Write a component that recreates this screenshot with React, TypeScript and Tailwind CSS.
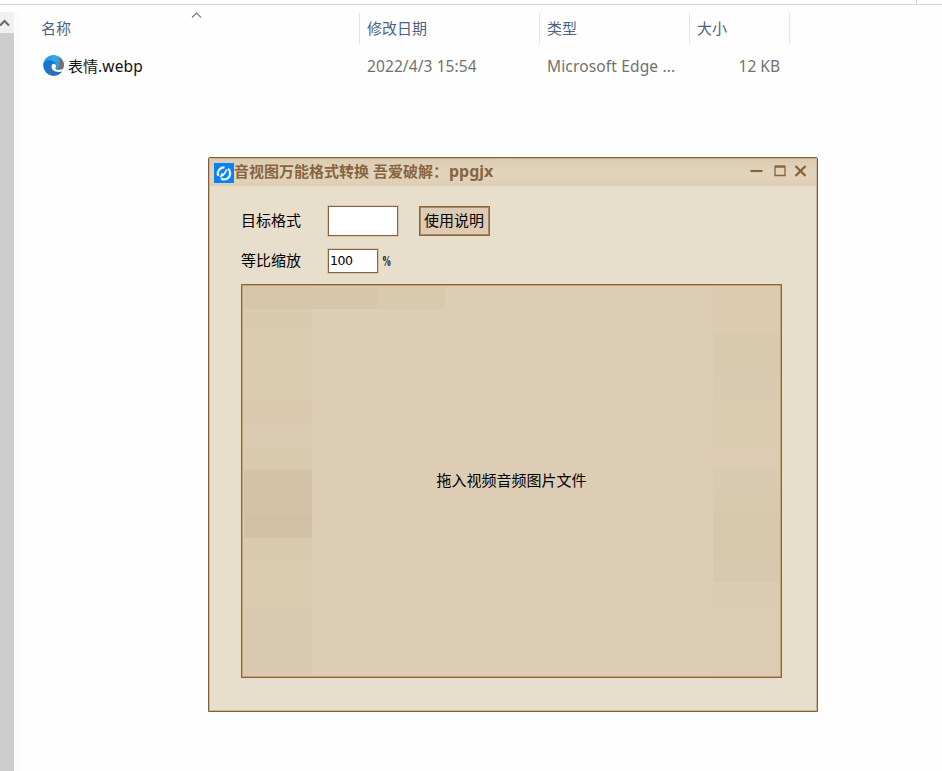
import React from "react";

const leftBands = [
  { h: 23, c: "#d6c5ab" },
  { h: 22, c: "#dacab0" },
  { h: 70, c: "#dbcbb1" },
  { h: 22, c: "#dac9af" },
  { h: 24, c: "#dbcbb2" },
  { h: 23, c: "#dacab0" },
  { h: 45, c: "#d3c2a7" },
  { h: 23, c: "#d1c0a6" },
  { h: 22, c: "#d9c9af" },
  { h: 47, c: "#dbcbb0" },
  { h: 69, c: "#dacab1" },
];

const rightBands = [
  { h: 45, c: "#dccbb1" },
  { h: 46, c: "#d9c9af" },
  { h: 23, c: "#dacab1" },
  { h: 46, c: "#dbcbb1" },
  { h: 22, c: "#ddccb3" },
  { h: 23, c: "#dacab1" },
  { h: 22, c: "#d9c9af" },
  { h: 47, c: "#d7c7ac" },
  { h: 22, c: "#d8c8af" },
  { h: 23, c: "#dbcbb2" },
  { h: 71, c: "#dcccb3" },
];

function Bands({ bands }: { bands: { h: number; c: string }[] }) {
  return (
    <>
      {bands.map((b, i) => (
        <div key={i} style={{ height: b.h, background: b.c }} />
      ))}
    </>
  );
}

function EdgeIcon() {
  return (
    <svg width="21" height="21" viewBox="0 0 20 20" className="mb-[2px] shrink-0">
      <defs>
        <linearGradient id="edgeTop" x1="0" y1="0" x2="1" y2="0.6">
          <stop offset="0" stopColor="#2487d6" />
          <stop offset="0.5" stopColor="#36a9ea" />
          <stop offset="1" stopColor="#3f8fc4" />
        </linearGradient>
      </defs>
      <circle cx="10" cy="10" r="9.8" fill="#0b76dc" />
      <path d="M0.4 8.6C1.4 3.6 5.2 0.2 10 0.2c5.8 0 9.8 4.2 9.8 9 0 2.8-2.2 4.8-5 4.8-1.6 0-3-.6-3-1.5 0-.6.8-.8.8-2.2C12.6 7.2 9.6 5 6.4 5 3.6 5 1.4 6.5.4 8.6Z" fill="url(#edgeTop)" />
      <path d="M15.5 2.6c2.7 1.7 4.3 4.2 4.3 7 0 2.5-2 4.4-5 4.4-.9 0-1.6-.2-2.2-.5 2.9-1.7 4.3-6.5 2.9-10.9Z" fill="#77716c" />
      <path d="M9.6 7.6c-2.5 1.5-4 4.4-2.8 7.5 1.7 3.9 7.2 4.5 12 .1-1.9 2.9-5 4.6-8.8 4.6-2.4 0-4.6-1.2-5.7-3.6-1.7-4 .8-8.5 5.3-8.6Z" fill="#456aa5" />
      <path d="M9.3 8.3c1.9-.2 3.2.8 3.2 2.3 0 .9-.7 1.200-.7 2 0 1 1.4 1.5 3 1.5 2 0 3.7-.5 4.9-1.6-.6 2.6-2.6 3.7-5.2 3.7-3.5 0-6.4-2-6.4-4.7 0-1.3.4-2.5 1.2-3.2Z" fill="#fefefe" />
    </svg>
  );
}

function ToolIcon() {
  return (
    <svg width="20" height="20" viewBox="0 0 20 20" className="shrink-0">
      <rect width="20" height="20" fill="#0a82f5" />
      <path d="M4.3 12.8A6.2 6.2 0 0 1 7 5.2Q8.500 4.300 10.500 4.400M14 5.700A6.200 6.200 0 0 1 13.500 15.500Q10.500 17.200 7 15.600" fill="none" stroke="#edf8ff" strokeWidth="2.300" />
      <path d="M7.200 10.500 9 12.200l3-3.700M8.800 12.200l-3 1.500M12.200 8.300V6.500" fill="none" stroke="#edf8ff" strokeWidth="1.800" />
    </svg>
  );
}

const cell = "flex h-[31px] items-center border-r border-[#e3e3e3] pl-[7px]";

function Explorer() {
  return (
    <div className="flex h-full flex-col">
      <div className="flex h-[5px] shrink-0 border-b border-[#d5d5d5]">
        <div className="w-[917px] border-r border-[#d5d5d5]" />
      </div>
      <div className="flex grow pt-[7px]">
        <div className="w-[14px] shrink-0 bg-[#cdcdcd]">
          <div className="flex h-[21px] items-center bg-[#eff1f1]">
            <svg width="10" height="10" viewBox="0 0 10 10">
              <path d="M0 7.5 4.5 3 9 7.5" fill="none" stroke="#6d655f" strokeWidth="2" />
            </svg>
          </div>
        </div>
        <div className="ml-[3px] grow border-l border-[#f5f5f5]">
          <div className="flex pt-px text-[15px] text-[#4a6384]">
            <div className="flex h-[31px] w-[342px] items-center border-r border-[#e3e3e3] pl-[23px]">
              <span className="w-[150px]">名称</span>
              <svg width="11" height="6" viewBox="0 0 11 6" className="mb-[27px]">
                <path d="M1 5.5 5.5 1 10 5.5" fill="none" stroke="#777" strokeWidth="1.1" />
              </svg>
            </div>
            <div className={cell + " w-[180px]"}>修改日期</div>
            <div className={cell + " w-[150px]"}>类型</div>
            <div className={cell + " w-[100px]"}>大小</div>
          </div>
          <div className="mt-[7px] flex h-[30px] items-center text-[15.5px] text-[#73716d]">
            <div className="flex w-[349px] items-center gap-[4px] pl-[25px] text-[#111]">
              <EdgeIcon />
              <span className="pt-px text-[15px]">表情<span className="text-[15.5px] tracking-[0.15px]">.webp</span></span>
            </div>
            <div className="w-[180px] pt-[2px] tracking-[0.1px]">2022/4/3 15:54</div>
            <div className="w-[150px] pt-[2px] tracking-[0.15px]">Microsoft Edge ...</div>
            <div className="w-[83px] pt-[2px] text-right">12 KB</div>
          </div>
        </div>
      </div>
    </div>
  );
}

function ConverterWindow() {
  return (
    <div className="absolute left-[208px] top-[157px] flex h-[555px] w-[610px] flex-col rounded-t-[2px] border border-[#7d5f38] bg-[#e7decc]">
      <div className="flex h-[28px] shrink-0 items-center border border-b-0 border-[#cdb698] bg-linear-to-b from-[#dccbb1] via-[#e2d5bd] to-[#dfceb5] pl-[4px]">
        <div className="pt-px"><ToolIcon /></div>
        <span className="mb-[3px] grow whitespace-pre text-[15px] font-bold text-[#87653f]">音视图万能格式转换 吾爱破解：<span className="ml-px text-[16px]">ppgjx</span></span>
        <svg width="58" height="16" viewBox="0 0 58 16" className="mb-[3px] mr-[9px] shrink-0" fill="none" stroke="#89643a">
          <path d="M1.5 8h12" strokeWidth="2.2" />
          <path d="M26 3.5h10v9H26z" strokeWidth="1.3" />
          <path d="M26 3.5h10" strokeWidth="2.2" />
          <path d="m46.5 3 10 10m0-10-10 10" strokeWidth="2.3" />
        </svg>
      </div>
      <div className="flex grow flex-col border-x border-b border-[#cdb698] bg-[#e7decc] pl-[31px] pt-[20px] text-[15px] text-black">
        <div className="flex h-[30px] items-center">
          <span className="mb-[2px] w-[87px]">目标格式</span>
          <div className="h-[30px] w-[70px] border border-[#8c6439] bg-white outline-1 outline-[#8c6439]/20" />
          <button className="ml-[21px] flex h-[30px] w-[71px] items-center justify-center whitespace-nowrap border-2 border-[#a98a64] bg-[#ddccb3] pb-[2px] pr-px outline-1 -outline-offset-1 outline-[#8c6439]">使用说明</button>
        </div>
        <div className="mt-[13px] flex h-[24px] items-center">
          <span className="mb-px w-[87px]">等比缩放</span>
          <div className="flex h-[24px] w-[50px] items-center border border-[#8c6439] bg-white pl-px font-['DejaVu_Sans'] text-[12.5px] tracking-[-0.4px] outline-1 outline-[#8c6439]/20">100</div>
          <span className="ml-[4px] font-['Liberation_Serif'] text-[15px] font-bold">
            <span className="inline-block w-[10px] origin-left scale-x-[0.62]">%</span>
          </span>
        </div>
        <div className="mt-[11px] flex h-[394px] w-[541px] border-2 border-[#c0a178] bg-[#ddcdb4] outline-1 -outline-offset-1 outline-[#8c6439]">
          <div className="w-[69px] overflow-hidden pl-px"><Bands bands={leftBands} /></div>
          <div className="flex grow flex-col">
            <div className="flex h-[23px]">
              <div className="w-[66px] bg-[#d7c6ac]" />
              <div className="w-[67px] bg-[#d9c9af]" />
            </div>
            <div className="flex h-[345px] items-center justify-center">
              <span className="mb-[3px] mr-[2px]">拖入视频音频图片文件</span>
            </div>
          </div>
          <div className="w-[67px] overflow-hidden"><Bands bands={rightBands} /></div>
        </div>
      </div>
    </div>
  );
}

export default function App() {
  return (
    <div className="relative h-[771px] w-[942px] overflow-hidden bg-[#fefefe] font-['Noto_Sans','Noto_Sans_CJK_SC',sans-serif] leading-none">
      <Explorer />
      <ConverterWindow />
    </div>
  );
}
